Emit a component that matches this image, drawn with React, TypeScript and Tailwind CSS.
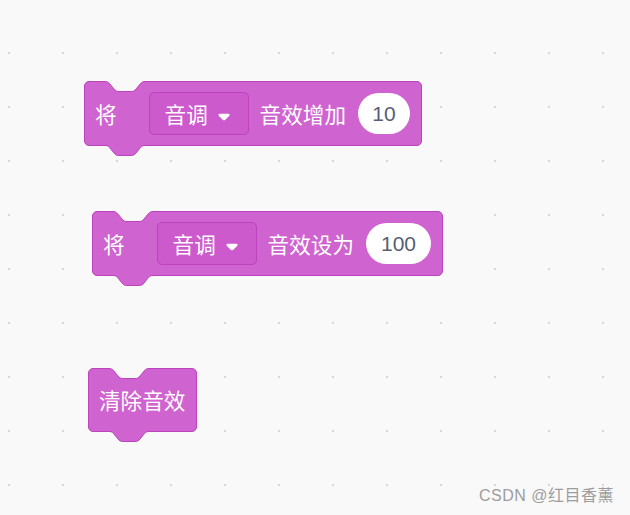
import type { ReactNode } from 'react'

const cjk = "font-['Noto_Sans_CJK_SC','Noto_Sans',sans-serif]"

// notch cut into the top edge of a stack block
const notchCurve =
  'M2 0.5 C4 0.5 5 1 6.5 2.5 L11 8 C12.5 9.8 13.5 10.5 16 10.5 H28 C30.5 10.5 31.5 9.8 33 8 L37.5 2.5 C39 1 40 0.5 42 0.5'

function TopNotch() {
  return (
    <svg className="absolute left-[18px] top-[-1px]" width="44" height="12" viewBox="0 0 44 12">
      <path d={`${notchCurve} V0 H2 Z`} fill="#f9f9f9" />
      <path d={notchCurve} fill="none" stroke="#bd42bd" strokeWidth="1" />
    </svg>
  )
}

function BottomTab() {
  return (
    <svg className="absolute left-[18px] bottom-[-12px]" width="44" height="12" viewBox="0 0 44 12">
      <path d={`${notchCurve} V0 H2 Z`} fill="#cf63cf" />
      <path d={notchCurve} fill="none" stroke="#bd42bd" strokeWidth="1" />
    </svg>
  )
}

function Block({ className, children }: { className: string; children: ReactNode }) {
  return (
    <div
      className={`absolute flex items-center rounded-[5px] border border-[#bd42bd] bg-[#cf63cf] pl-[10px] pr-[11px] ${className}`}
    >
      <TopNotch />
      {children}
      <BottomTab />
    </div>
  )
}

function Label({ text, className = '' }: { text: string; className?: string }) {
  return <span className={`${cjk} text-[21.6px] leading-none text-white whitespace-nowrap ${className}`}>{text}</span>
}

function Dropdown({ text }: { text: string }) {
  return (
    <div className="ml-[32px] flex h-[43px] w-[100px] items-center rounded-[5px] border border-[#bd42bd] bg-[#cc5acc] pl-[15px]">
      <Label text={text} />
      <svg className="ml-[10px] mt-[7px]" width="12" height="8" viewBox="0 0 12 8">
        <path
          d="M1.6 0.8 H10.4 C11.5 0.8 12 1.9 11.3 2.7 L7 6.9 C6.4 7.5 5.6 7.5 5 6.9 L0.7 2.7 C0 1.9 0.5 0.8 1.6 0.8 Z"
          fill="#ffffff"
        />
      </svg>
    </div>
  )
}

function NumberInput({ value, width }: { value: string; width: string }) {
  return (
    <div
      className={`ml-[12px] flex h-[41px] items-center justify-center rounded-full bg-white font-['Liberation_Sans',sans-serif] text-[21px] text-[#575e75] ${width}`}
    >
      {value}
    </div>
  )
}

export default function App() {
  return (
    <div className="relative h-[515px] w-[630px] overflow-hidden bg-[#f9f9f9] bg-[radial-gradient(circle,#d8d8d8_1px,transparent_1.6px)] bg-[size:54px_54px] bg-[position:-18px_26px]">
      {/* change effect by */}
      <Block className="left-[84px] top-[81px] h-[65px]">
        <Label text="将" />
        <Dropdown text="音调" />
        <Label text="音效增加" className="ml-[11px]" />
        <NumberInput value="10" width="w-[52px]" />
      </Block>

      {/* set effect to */}
      <Block className="left-[92px] top-[211px] h-[65px]">
        <Label text="将" />
        <Dropdown text="音调" />
        <Label text="音效设为" className="ml-[11px]" />
        <NumberInput value="100" width="w-[65px]" />
      </Block>

      {/* clear effects */}
      <Block className="left-[88px] top-[368px] h-[64px]">
        <Label text="清除音效" />
      </Block>

      <div
        className={`absolute right-[16px] top-[488px] font-['Liberation_Sans','Noto_Sans_CJK_SC',sans-serif] text-[16px] leading-none tracking-[0.5px] text-[#9d9d9d]`}
      >
        CSDN @红目香薰
      </div>
    </div>
  )
}
